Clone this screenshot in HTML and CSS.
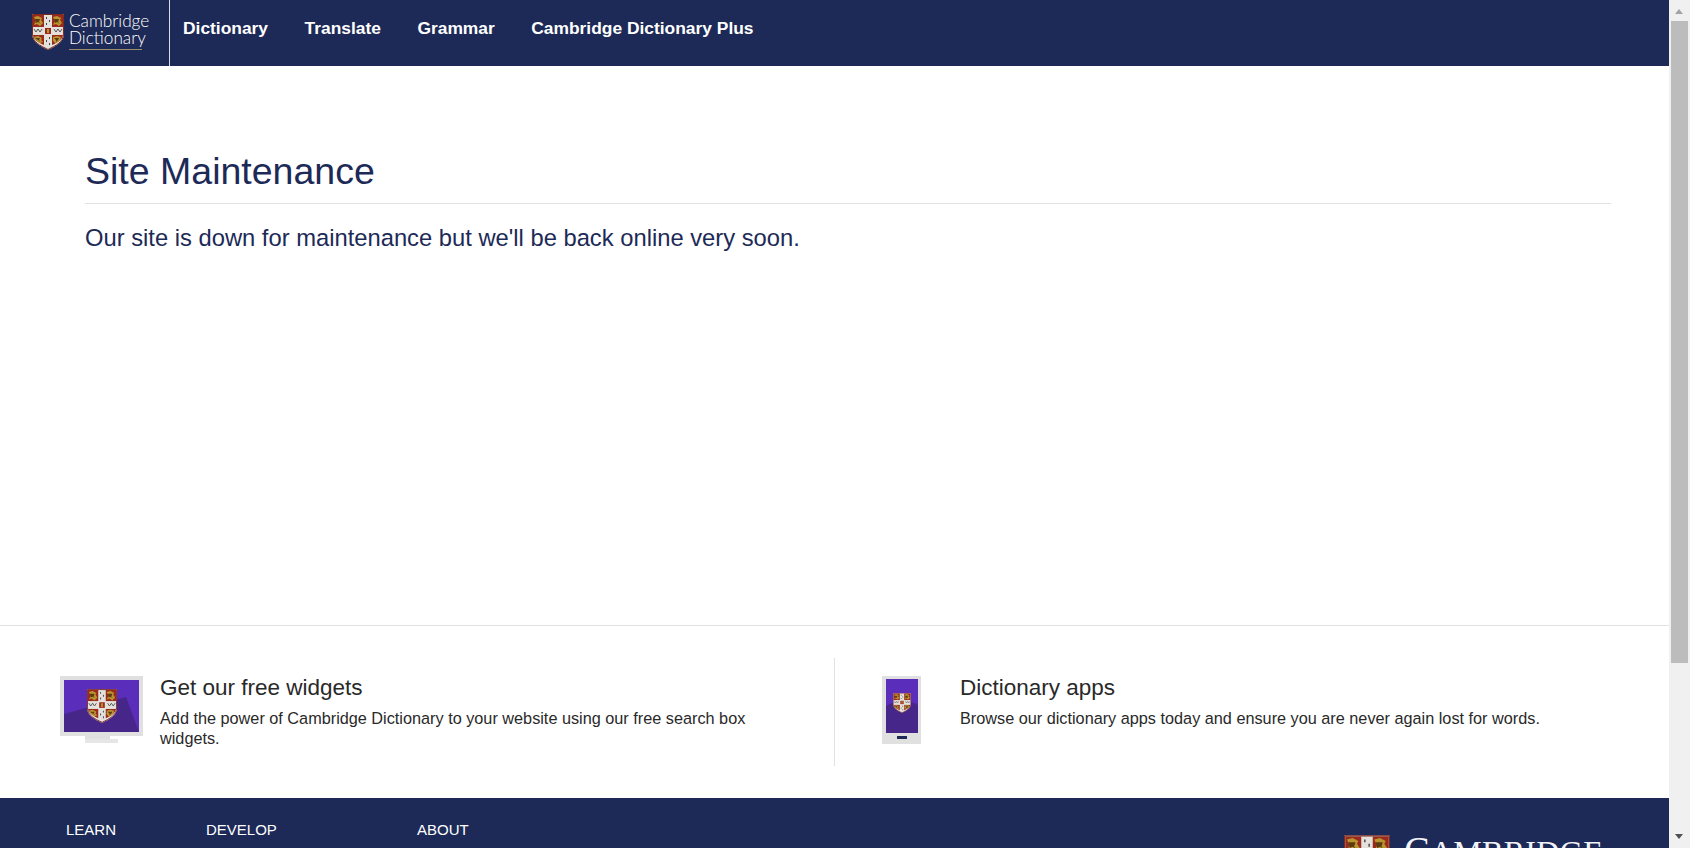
FILE: index.html
```html
<!DOCTYPE html>
<html lang="en">
<head>
  <meta charset="UTF-8">
  <meta name="viewport" content="width=device-width, initial-scale=1.0">
  <title>Site Maintenance | Cambridge Dictionary</title>
  <link rel="stylesheet" href="styles.css">
</head>
<body>
  <svg class="defs" width="0" height="0">
    <symbol id="shield" viewBox="0 0 32 36">
      <path d="M0 0H32V20C32 28 24 32 16 36C8 32 0 28 0 20Z" fill="#e4e1dd"/>
      <path d="M1 1H12V13H1ZM20 1H31V13H20ZM1 21H12V31C7 29 2 26 1 21ZM20 21H31C30 26 25 29 20 31Z" fill="#9c2a1c"/>
      <path d="M2 3L6 2L10 4L9 6L11 9L8 12L5 10L2 11L4 7ZM21 3L25 2L29 4L28 6L30 9L27 12L24 10L21 11L23 7ZM2 23L6 22L10 24L9 26L11 28L8 29L5 27L3 25ZM21 23L25 22L29 23L28 26L26 28L23 29L21 27Z" fill="#b8962f"/>
      <path d="M3 5L8 5L7 8L9 10L6 8L4 9ZM22 5L27 5L26 8L28 10L25 8L23 9ZM3 24L8 24L7 26L9 28L6 26ZM22 24L27 24L26 26L24 28L24 26Z" fill="#5c3a12"/>
      <path d="M0 13H32V21H0Z" fill="#e4e1dd"/>
      <path d="M2 15L4 18L6 15L8 18L10 15M22 15L24 18L26 15L28 18L30 15" stroke="#555" stroke-width="1" fill="none"/>
      <path d="M13 14H19V20H13Z" fill="#9c2a1c"/>
      <path d="M15 15H17V19H15Z" fill="#b8962f"/>
      <path d="M14 3H15V5H14ZM17 6H18V8H17ZM14 9H15V11H14ZM17 23H18V25H17ZM14 26H15V28H14ZM17 29H18V31H17Z" fill="#444"/>
      <path d="M0.5 0.5H31.5V20C31.5 28 24 31.5 16 35.5C8 31.5 0.5 28 0.5 20Z" fill="none" stroke="#7a2a20" stroke-width="1"/>
    </symbol>
  </svg>

  <div class="window">
    <div class="page">
      <header class="topbar">
        <a class="logo" href="#">
          <svg class="logo-shield"><use href="#shield"/></svg>
          <span class="logo-text">Cambridge<br>Dictionary</span>
        </a>
        <nav class="mainnav">
          <a href="#">Dictionary</a>
          <a href="#">Translate</a>
          <a href="#">Grammar</a>
          <a href="#">Cambridge Dictionary Plus</a>
        </nav>
      </header>

      <main class="content">
        <h1>Site Maintenance</h1>
        <p>Our site is down for maintenance but we'll be back online very soon.</p>
      </main>

      <section class="promos">
        <div class="promo promo-left">
          <svg class="monitor" width="83" height="67" viewBox="0 0 83 67">
            <rect x="0" y="0" width="83" height="60" fill="#e0e0e0"/>
            <rect x="25" y="60" width="25" height="3" fill="#e0e0e0"/>
            <rect x="25" y="63" width="33" height="4" fill="#e6e6e6"/>
            <rect x="4" y="4" width="75" height="52" fill="#5b2dbb"/>
            <path d="M4 38L66 21L79 56H4Z" fill="#47268a"/>
            <use href="#shield" x="27" y="13" width="30" height="34"/>
          </svg>
          <div class="promo-text">
            <h2>Get our free widgets</h2>
            <p>Add the power of Cambridge Dictionary to your website using our free search box widgets.</p>
          </div>
        </div>
        <div class="promo promo-right">
          <svg class="phone" width="39" height="68" viewBox="0 0 39 68">
            <rect width="39" height="68" fill="#e0e0e0"/>
            <rect x="4" y="3" width="32" height="54" fill="#5b2dbb"/>
            <path d="M4 30C14 24 26 24 36 29V57H4Z" fill="#47268a"/>
            <use href="#shield" x="11" y="17" width="18" height="20"/>
            <rect x="15" y="60" width="10" height="3" fill="#1d2a57"/>
          </svg>
          <div class="promo-text">
            <h2>Dictionary apps</h2>
            <p>Browse our dictionary apps today and ensure you are never again lost for words.</p>
          </div>
        </div>
      </section>

      <footer class="sitefoot">
        <div class="foot-links">
          <a class="foot-learn" href="#">LEARN</a>
          <a class="foot-develop" href="#">DEVELOP</a>
          <a href="#">ABOUT</a>
        </div>
        <div class="foot-brand">
          <svg class="foot-shield"><use href="#shield"/></svg>
          <span class="foot-name">CAMBRIDGE</span>
        </div>
      </footer>
    </div>

    <div class="scrollbar">
      <span class="arrow arrow-up"></span>
      <span class="thumb"></span>
      <span class="arrow arrow-down"></span>
    </div>
  </div>
</body>
</html>
```

FILE: styles.css
```css
html, body {
  margin: 0;
  padding: 0;
  height: 100%;
  overflow: hidden;
}

body {
  font-family: "Liberation Sans", Arial, sans-serif;
  background-color: #fff;
}

a {
  color: #fff;
  text-decoration: none;
}

.defs {
  display: block;
  height: 0;
}

.window {
  display: flex;
  height: 848px;
}

.page {
  flex: 1;
  display: flex;
  flex-direction: column;
  overflow: hidden;
}

/* top bar */
.topbar {
  flex: none;
  height: 66px;
  display: flex;
  background-color: #1d2a57;
}

.logo {
  width: 137px;
  padding-left: 32px;
  display: flex;
  align-items: flex-start;
  border-right: 1px solid #d8dbe4;
}

.logo-shield {
  flex: none;
  width: 32px;
  height: 36px;
  margin-top: 14px;
}

.logo-text {
  width: 73px;
  margin: 12px 0 0 5px;
  padding-bottom: 3px;
  border-bottom: 1px solid #9c8d6c;
  font-family: Lato, sans-serif;
  font-weight: 300;
  font-size: 17.2px;
  line-height: 17px;
  white-space: nowrap;
  color: #fff;
}

.mainnav {
  display: flex;
  align-items: center;
  gap: 36.5px;
  padding: 0 0 10px 13px;
  font-size: 17.4px;
  font-weight: bold;
}

/* maintenance message */
.content {
  flex: none;
  height: 559px;
  box-sizing: border-box;
  padding: 0 58px 0 85px;
  color: #1d2a57;
}

.content h1 {
  margin: 83px 0 0;
  padding-bottom: 10px;
  font-size: 37.5px;
  font-weight: normal;
  line-height: 44px;
  border-bottom: 1px solid #e2e2e2;
}

.content p {
  margin: 20px 0 0;
  font-size: 23.75px;
  line-height: 28px;
}

/* widgets and apps */
.promos {
  flex: none;
  height: 172px;
  display: flex;
  border-top: 1px solid #e2e2e2;
}

.promo {
  display: flex;
  align-items: flex-start;
  height: 108px;
  margin-top: 32px;
  box-sizing: border-box;
}

.promo-left {
  width: 835px;
  padding: 18px 40px 0 60px;
  border-right: 1px solid #e2e2e2;
}

.promo-right {
  flex: 1;
  padding: 18px 40px 0 47px;
}

.monitor {
  flex: none;
  margin-right: 17px;
}

.phone {
  flex: none;
  margin-right: 39px;
}

.promo-text {
  color: #292929;
}

.promo-text h2 {
  margin: 0;
  font-size: 22.5px;
  font-weight: normal;
  line-height: 24px;
}

.promo-text p {
  margin: 8px 0 0;
  font-size: 16.25px;
  line-height: 20px;
}

/* footer, cut off by the window */
.sitefoot {
  flex: 1;
  display: flex;
  justify-content: space-between;
  background-color: #1d2a57;
  overflow: hidden;
}

.foot-links {
  display: flex;
  padding: 22px 0 0 66px;
  font-size: 15px;
  line-height: 20px;
}

.foot-learn {
  width: 140px;
}

.foot-develop {
  width: 211px;
}

.foot-brand {
  display: flex;
  align-items: flex-start;
  padding: 37px 66px 0 0;
}

.foot-shield {
  flex: none;
  width: 46px;
  height: 52px;
}

.foot-name {
  margin: -7px 0 0 14px;
  font-family: "Liberation Serif", serif;
  font-size: 32px;
  line-height: 44px;
  letter-spacing: 0.3px;
  color: #f2f3f6;
}

.foot-name::first-letter {
  font-size: 38px;
}

/* scrollbar strip on the right */
.scrollbar {
  position: relative;
  flex: none;
  width: 21px;
  background-color: #f0f0f0;
}

.thumb {
  position: absolute;
  top: 21px;
  left: 2px;
  width: 17px;
  height: 642px;
  background-color: #bcbcbc;
}

.arrow {
  position: absolute;
  left: 6px;
  width: 0;
  height: 0;
  border-left: 4.5px solid transparent;
  border-right: 4.5px solid transparent;
}

.arrow-up {
  top: 9px;
  border-bottom: 5px solid #a3a3a3;
}

.arrow-down {
  top: 834px;
  border-top: 5px solid #505050;
}
```
